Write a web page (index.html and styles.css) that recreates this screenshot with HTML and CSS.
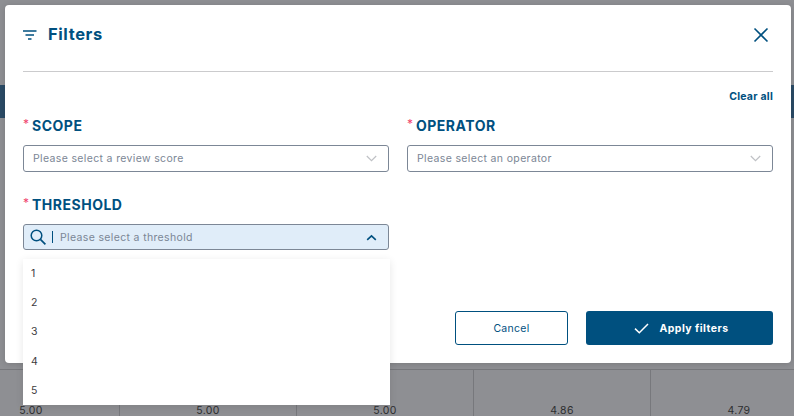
FILE: index.html
```html
<!DOCTYPE html>
<html lang="en">
<head>
<meta charset="utf-8">
<title>Filters</title>
<link rel="stylesheet" href="styles.css">
</head>
<body>
<div class="page">
  <div class="bg-bar"></div>
  <div class="bg-grid">
    <div class="bg-cell">5.00</div>
    <div class="bg-cell">5.00</div>
    <div class="bg-cell">5.00</div>
    <div class="bg-cell">4.86</div>
    <div class="bg-cell">4.79</div>
  </div>
  <div class="modal">
    <header class="modal-head">
      <svg class="filter-icon" width="14" height="10" viewBox="0 0 14 10"><path d="M0 1h13.5M2.5 5h8.5M5 9h3.5" stroke="#00507f" stroke-width="1.3" fill="none"/></svg>
      <h1 class="title">Filters</h1>
      <svg class="close-icon" width="16" height="16" viewBox="0 0 16 16"><path d="M1.5 1.5l13 13M14.5 1.5l-13 13" stroke="#00507f" stroke-width="1.6" fill="none"/></svg>
    </header>
    <div class="clear-row"><a class="clear">Clear all</a></div>
    <div class="form-grid">
      <div class="field">
        <label class="label"><span class="req">*</span>SCOPE</label>
        <div class="select"><span class="placeholder">Please select a review score</span>
          <svg class="chev" width="11" height="7" viewBox="0 0 11 7"><path d="M.8 1l4.7 4.7L10.2 1" stroke="#bfc1c5" stroke-width="1.2" fill="none"/></svg></div>
      </div>
      <div class="field">
        <label class="label"><span class="req">*</span>OPERATOR</label>
        <div class="select"><span class="placeholder">Please select an operator</span>
          <svg class="chev" width="11" height="7" viewBox="0 0 11 7"><path d="M.8 1l4.7 4.7L10.2 1" stroke="#bfc1c5" stroke-width="1.2" fill="none"/></svg></div>
      </div>
      <div class="field">
        <label class="label"><span class="req">*</span>THRESHOLD</label>
        <div class="select open">
          <svg class="search" width="16" height="16" viewBox="0 0 16 16"><circle cx="6.5" cy="6.5" r="5.3" stroke="#00507f" stroke-width="1.5" fill="none"/><path d="M10.4 10.4l5 5" stroke="#00507f" stroke-width="1.7" fill="none"/></svg>
          <span class="caret"></span>
          <span class="placeholder">Please select a threshold</span>
          <svg class="chev" width="11" height="7" viewBox="0 0 11 7"><path d="M1.2 5.8l4.3-4 4.3 4" stroke="#00507f" stroke-width="1.6" fill="none"/></svg>
        </div>
        <ul class="menu">
          <li>1</li><li>2</li><li>3</li><li>4</li><li>5</li>
        </ul>
      </div>
    </div>
    <footer class="actions">
      <button class="btn cancel">Cancel</button>
      <button class="btn apply">
        <svg width="15" height="11" viewBox="0 0 15 11"><path d="M1 5.6l4.3 4.2L14 1" stroke="#fff" stroke-width="1.5" fill="none"/></svg>
        Apply filters
      </button>
    </footer>
  </div>
</div>
</body>
</html>
```

FILE: styles.css
```css
* { box-sizing: border-box; }
html, body { margin: 0; padding: 0; }
body {
  font-family: "Inter", "Noto Sans", "Liberation Sans", sans-serif;
  width: 794px;
  height: 416px;
  overflow: hidden;
}
.page {
  position: relative;
  width: 794px;
  height: 416px;
  background: #8e8f93;
  overflow: hidden;
}
.bg-bar {
  position: absolute;
  left: 0;
  right: 0;
  top: 85px;
  height: 33px;
  background: #2b4b66;
}
.bg-grid {
  position: absolute;
  left: -57px;
  top: 369px;
  display: grid;
  grid-template-columns: repeat(5, 177px);
  height: 47px;
  border-top: 1px solid #77787c;
}
.bg-cell {
  border-right: 1px solid #77787c;
  font-size: 10.5px;
  color: #2d2e30;
  text-align: center;
  padding-top: 34px;
  letter-spacing: .3px;
  line-height: 13px;
}
.modal {
  position: absolute;
  left: 5px;
  top: 5px;
  width: 786px;
  height: 358px;
  background: #fff;
  border-radius: 4px;
  padding: 0 18px;
  box-shadow: 0 1px 6px rgba(0,0,0,.15);
}
.modal-head {
  display: flex;
  align-items: center;
  height: 67px;
  padding-bottom: 8px;
  border-bottom: 1px solid #cbcbcd;
}
.filter-icon { margin-right: 11px; margin-top: 1px; }
.title {
  margin: 0;
  font-size: 16.5px;
  font-weight: 700;
  color: #00507f;
  letter-spacing: .6px;
  flex: 1;
}
.close-icon { margin-right: 4px; margin-top: 1px; }
.clear-row {
  display: flex;
  justify-content: flex-end;
  margin-top: 18px;
  height: 13px;
}
.clear {
  font-size: 10.5px;
  font-weight: 700;
  line-height: 13px;
  color: #00507f;
  letter-spacing: .25px;
}
.form-grid {
  display: grid;
  grid-template-columns: 366px 366px;
  column-gap: 18px;
  row-gap: 23px;
  margin-top: 13px;
}
.field { position: relative; }
.label {
  display: flex;
  height: 18px;
  padding-top: 1px;
  margin-bottom: 11px;
  font-size: 14px;
  line-height: 18px;
  font-weight: 700;
  color: #00507f;
  letter-spacing: .5px;
}
.req {
  color: #f0446d;
  width: 9px;
  font-weight: 400;
  font-size: 12px;
  line-height: 14px;
}
.select {
  display: flex;
  align-items: center;
  height: 27px;
  padding: 0 11px 0 9px;
  border: 1px solid #7c8796;
  border-radius: 3px;
  background: #fff;
}
.select.open {
  height: 26px;
  margin-top: 1px;
  background: #e0edf9;
  padding-left: 6px;
}
.placeholder {
  flex: 1;
  font-size: 10.5px;
  color: #7b8695;
  letter-spacing: .35px;
}
.search { margin-right: 6px; }
.caret {
  width: 1px;
  height: 12px;
  background: #00507f;
  margin-right: 7px;
}
.menu {
  position: absolute;
  left: 0;
  top: 64px;
  width: 367px;
  margin: 0;
  padding: 0;
  list-style: none;
  background: #fff;
  height: 146px;
  box-shadow: 0 2px 8px rgba(0,0,0,.1);
  z-index: 2;
}
.menu li {
  height: 29.2px;
  padding: 7px 0 0 8px;
  font-size: 10.5px;
  line-height: 15px;
  color: #3c3c3e;
}
.actions {
  position: absolute;
  right: 18px;
  bottom: 18px;
  display: flex;
  gap: 18px;
}
.btn {
  height: 34px;
  border-radius: 3px;
  font-family: inherit;
  font-size: 10.5px;
  padding: 0;
  display: flex;
  align-items: center;
  justify-content: center;
}
.cancel {
  width: 113px;
  background: #fff;
  border: 1px solid #00507f;
  color: #00507f;
  font-weight: 400;
  letter-spacing: .3px;
}
.apply {
  width: 187px;
  background: #00507f;
  border: 0;
  color: #fff;
  font-weight: 700;
  gap: 11px;
  padding-left: 3px;
  letter-spacing: .45px;
}
```
